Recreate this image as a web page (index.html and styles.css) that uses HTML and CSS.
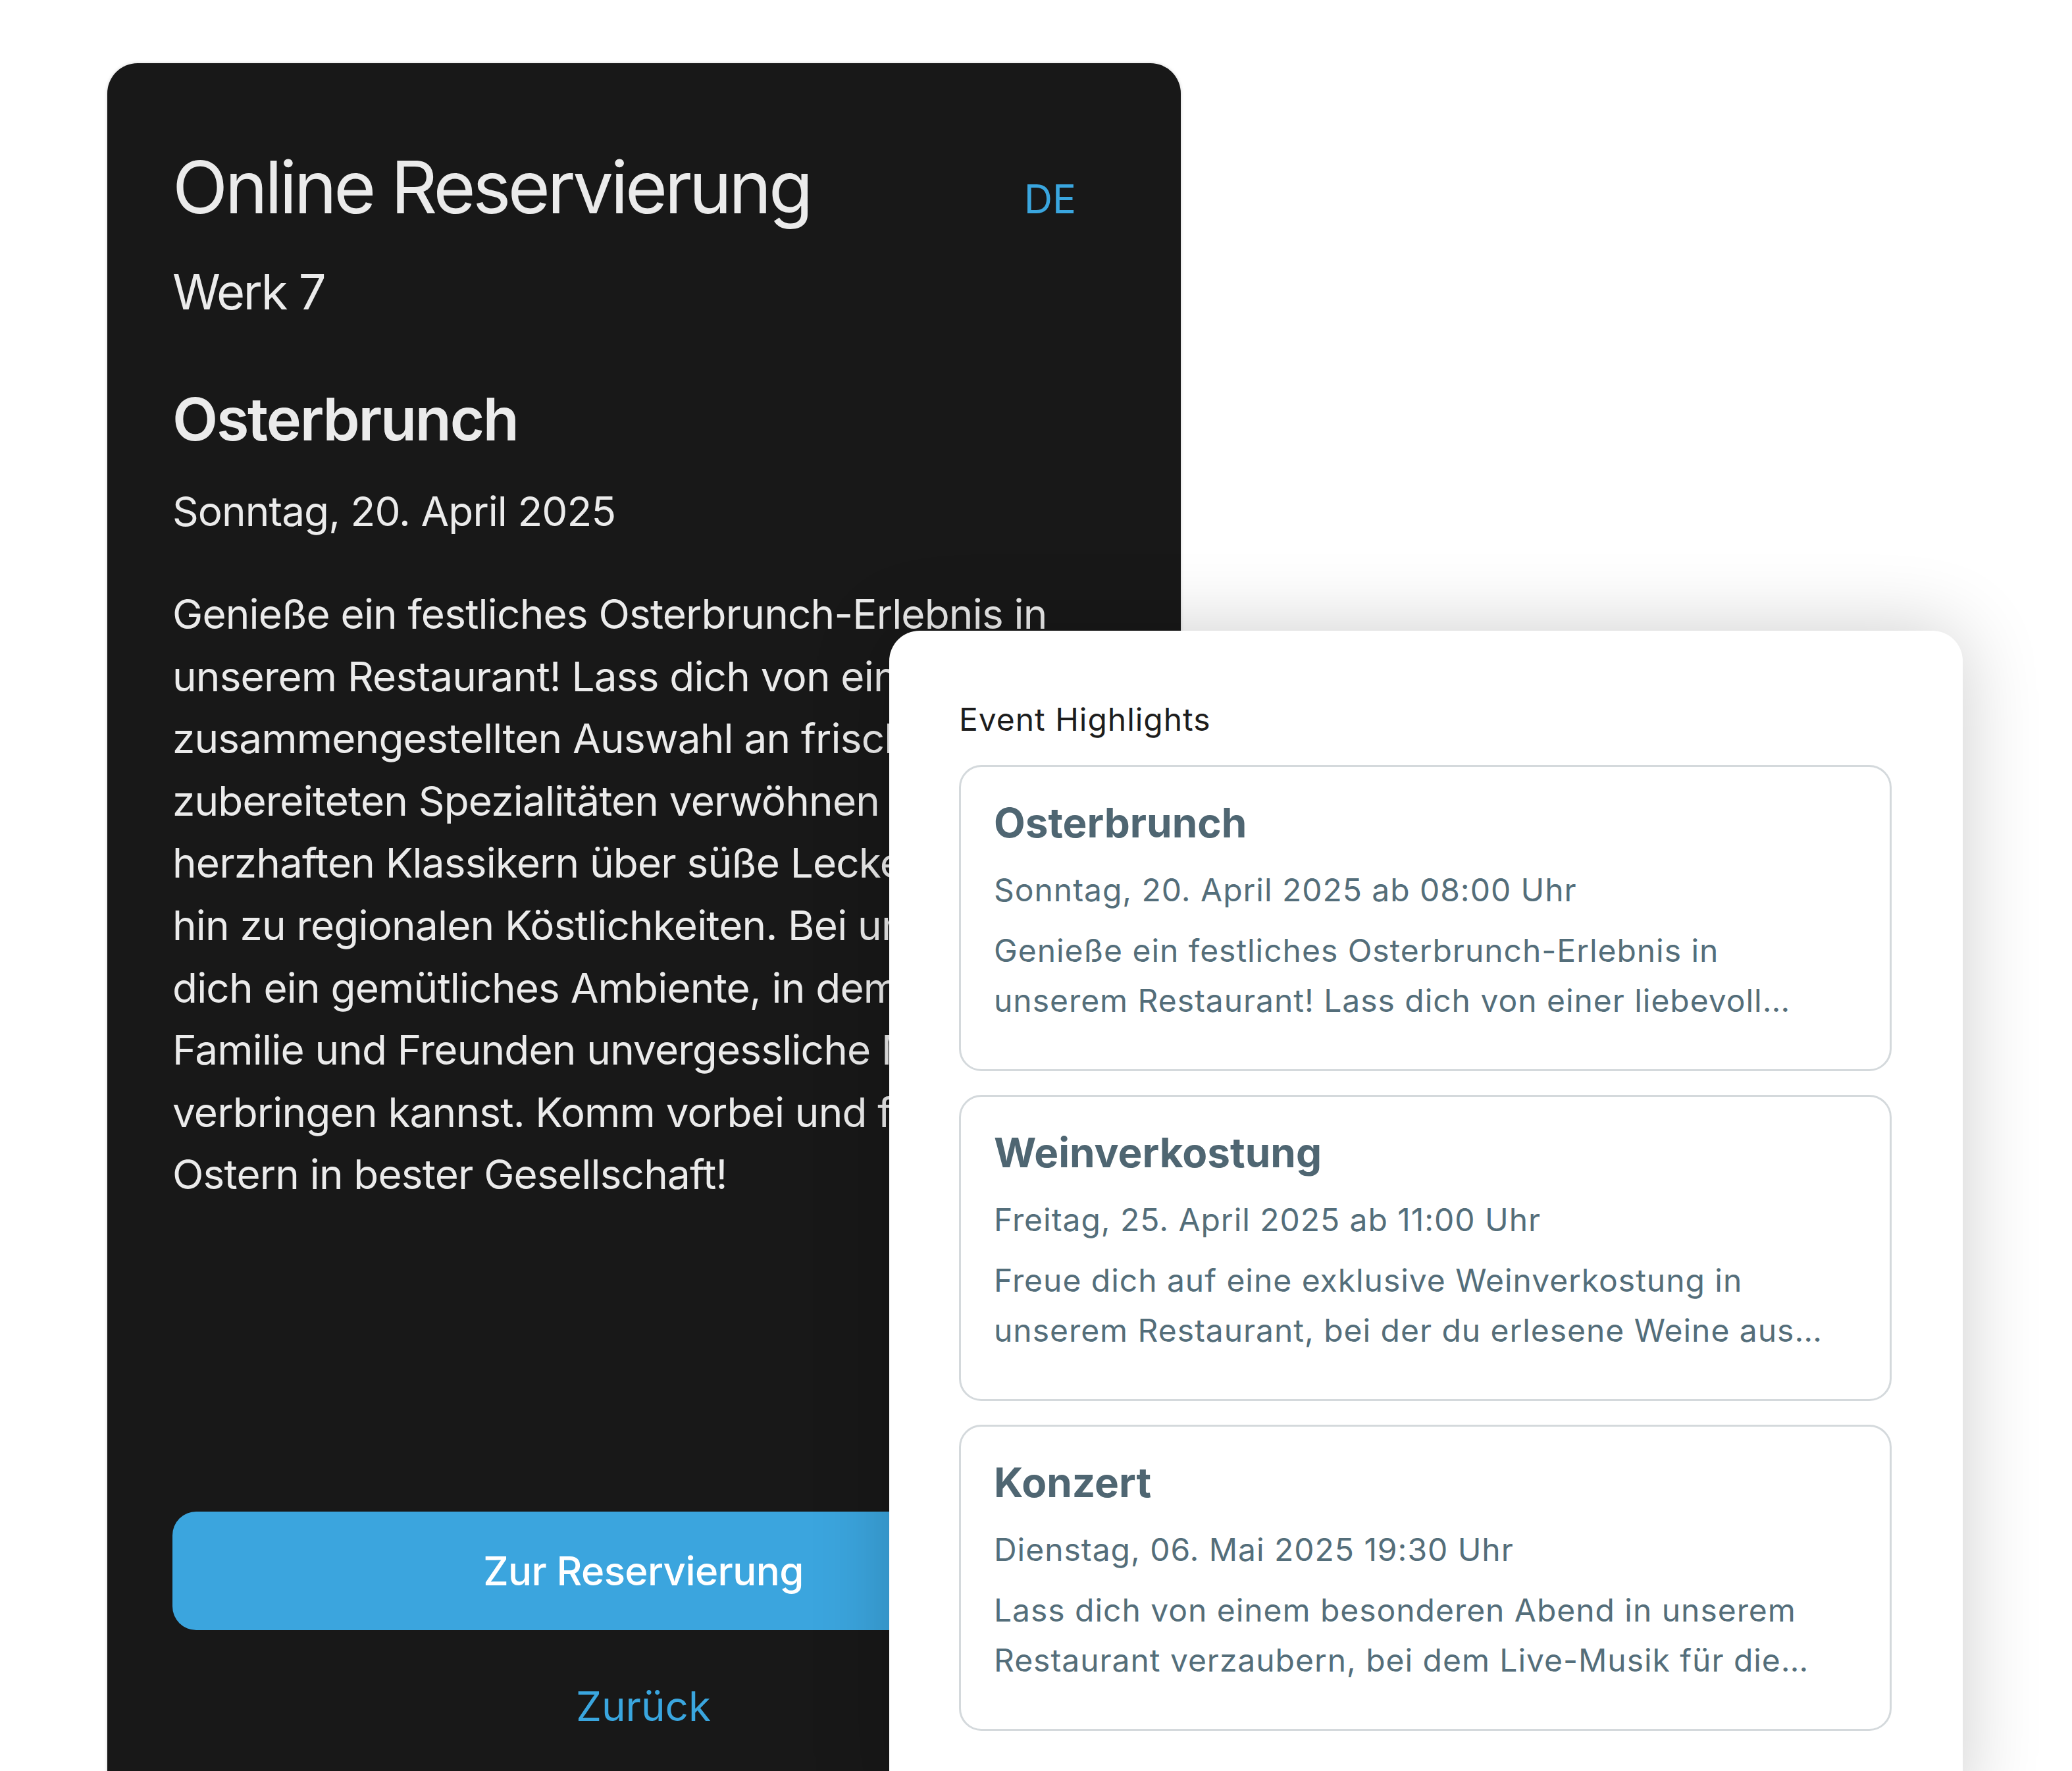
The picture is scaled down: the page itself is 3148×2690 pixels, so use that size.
FILE: index.html
```html
<!DOCTYPE html>
<html lang="de">
<head>
    <meta charset="UTF-8">
    <meta name="viewport" content="width=device-width, initial-scale=1.0">
    <title>Online Reservierung – Werk 7</title>
    <link rel="stylesheet" href="styles.css">
</head>
<body>
    <div class="stage">
        <div class="booking">
            <div class="booking-head">
                <h1 class="booking-title">Online Reservierung</h1>
                <a class="lang" href="#">DE</a>
            </div>
            <p class="venue">Werk 7</p>
            <h2 class="event-name">Osterbrunch</h2>
            <p class="event-date">Sonntag, 20. April 2025</p>
            <p class="event-text">Genieße ein festliches Osterbrunch-Erlebnis in<br>
                unserem Restaurant! Lass dich von einer liebevoll<br>
                zusammengestellten Auswahl an frisch<br>
                zubereiteten Spezialitäten verwöhnen – von<br>
                herzhaften Klassikern über süße Leckereien bis<br>
                hin zu regionalen Köstlichkeiten. Bei uns erwartet<br>
                dich ein gemütliches Ambiente, in dem du mit<br>
                Familie und Freunden unvergessliche Momente<br>
                verbringen kannst. Komm vorbei und feiere<br>
                Ostern in bester Gesellschaft!</p>
            <div class="actions">
                <a class="btn-primary" href="#">Zur Reservierung</a>
                <a class="btn-back" href="#">Zurück</a>
            </div>
        </div>

        <div class="highlights">
            <h3 class="highlights-title">Event Highlights</h3>
            <div class="highlight-list">
                <div class="highlight">
                    <h4 class="highlight-name">Osterbrunch</h4>
                    <p class="highlight-date">Sonntag, 20. April 2025 ab 08:00 Uhr</p>
                    <p class="highlight-text">Genieße ein festliches Osterbrunch-Erlebnis in unserem Restaurant! Lass dich von einer liebevoll zusammengestellten Auswahl an frisch zubereiteten Spezialitäten verwöhnen.</p>
                </div>
                <div class="highlight">
                    <h4 class="highlight-name">Weinverkostung</h4>
                    <p class="highlight-date">Freitag, 25. April 2025 ab 11:00 Uhr</p>
                    <p class="highlight-text">Freue dich auf eine exklusive Weinverkostung in unserem Restaurant, bei der du erlesene Weine aus verschiedenen Anbaugebieten probieren kannst.</p>
                </div>
                <div class="highlight">
                    <h4 class="highlight-name">Konzert</h4>
                    <p class="highlight-date">Dienstag, 06. Mai 2025 19:30 Uhr</p>
                    <p class="highlight-text">Lass dich von einem besonderen Abend in unserem Restaurant verzaubern, bei dem Live-Musik für die perfekte Atmosphäre sorgt.</p>
                </div>
            </div>
        </div>
    </div>
</body>
</html>
```

FILE: styles.css
```css
* {
    box-sizing: border-box;
}
html, body {
    height: 100%;
}
body {
    margin: 0;
    background-color: #ffffff;
    font-family: Inter, 'Noto Sans', sans-serif;
    overflow: hidden;
}
a {
    text-decoration: none;
}
.stage {
    position: relative;
    padding: 96px 0 0 163px;
}

/* dark booking panel */
.booking {
    width: 1631px;
    height: 2700px;
    padding: 121px 101px 0 99px;
    background-color: #181818;
    border-radius: 46px;
    box-shadow: 0 0 5px rgba(0, 0, 0, 0.18);
    color: #ebebeb;
}
.booking-head {
    display: flex;
    justify-content: space-between;
    align-items: baseline;
}
.booking-title {
    margin: 0;
    font-size: 110px;
    line-height: 134px;
    font-weight: 400;
    letter-spacing: -0.04em;
}
.lang {
    margin-right: 58px;
    font-size: 60px;
    color: #3aa6df;
}
.venue {
    margin: 45px 0 0;
    font-size: 74px;
    line-height: 94px;
    letter-spacing: -0.03em;
}
.event-name {
    margin: 92px 0 0;
    font-size: 90px;
    line-height: 110px;
    font-weight: 600;
    letter-spacing: -0.025em;
}
.event-date {
    margin: 38px 0 0;
    font-size: 62px;
    line-height: 94px;
    letter-spacing: -0.015em;
}
.event-text {
    margin: 62px 0 0;
    font-size: 62px;
    line-height: 94.6px;
    letter-spacing: -0.013em;
    white-space: nowrap;
}
.actions {
    margin-top: 464px;
    display: flex;
    flex-direction: column;
    align-items: stretch;
}
.btn-primary {
    display: flex;
    justify-content: center;
    align-items: center;
    height: 180px;
    border-radius: 36px;
    background-color: #3ba5de;
    color: #ffffff;
    font-size: 60px;
    font-weight: 500;
    letter-spacing: -0.01em;
}
.btn-back {
    margin-top: 69px;
    text-align: center;
    font-size: 62px;
    line-height: 94px;
    color: #3aa6df;
}

/* event highlights card, lying over the panel */
.highlights {
    position: absolute;
    left: 1351px;
    top: 958px;
    width: 1631px;
    height: 1800px;
    padding: 107px 108px 0 106px;
    background-color: #ffffff;
    border-radius: 46px;
    box-shadow: 0 0 120px rgba(0, 0, 0, 0.2);
}
.highlights-title {
    margin: 0;
    font-size: 48px;
    line-height: 56px;
    font-weight: 400;
    letter-spacing: 0.02em;
    color: #1d1d1d;
}
.highlight-list {
    margin-top: 41px;
    display: flex;
    flex-direction: column;
    gap: 36px;
}
.highlight {
    padding: 48px 80px 66px 50px;
    border: 3px solid #d4d9dc;
    border-radius: 34px;
    color: #546e7a;
}
.highlight-name {
    margin: 0;
    font-size: 62px;
    line-height: 74px;
    font-weight: 700;
    color: #4f6672;
}
.highlight-date {
    margin: 33px 0 0;
    font-size: 48px;
    line-height: 64px;
    letter-spacing: 0.02em;
}
.highlight-text {
    margin: 22px 0 0;
    font-size: 48px;
    line-height: 76px;
    letter-spacing: 0.02em;
    display: -webkit-box;
    -webkit-line-clamp: 2;
    -webkit-box-orient: vertical;
    overflow: hidden;
}
```
